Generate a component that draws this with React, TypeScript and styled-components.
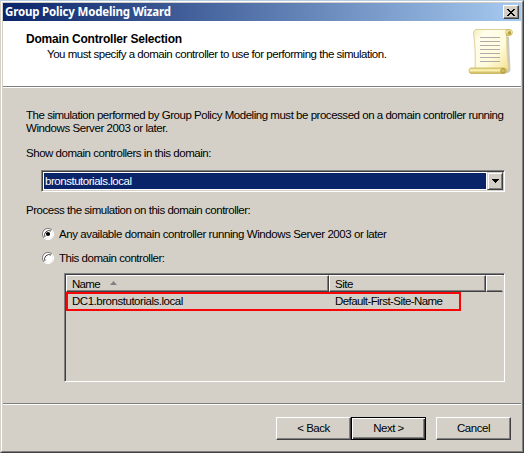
import React from "react";
import styled, { createGlobalStyle } from "styled-components";

const Global = createGlobalStyle`
  html, body { margin: 0; padding: 0; overflow: hidden; background: #d4d0c8; }
  * { box-sizing: border-box; }
`;

const Frame = styled.div`
  width: 524px;
  height: 453px;
  background: #d4d0c8;
  border-style: solid;
  border-width: 1px;
  border-color: #b9cde2 #404040 #404040 #d4d0c8;
`;

const FrameInner = styled.div`
  height: 451px;
  border-style: solid;
  border-width: 1px;
  border-color: #fff #808080 #808080 #fff;
  padding: 1px;
  display: flex;
  flex-direction: column;
  font-family: "Liberation Sans", Arial, sans-serif;
  font-size: 11.5px;
  line-height: 13px;
  color: #000;
`;

const Label = styled.span<{ $track?: number }>`
  letter-spacing: ${(p) => p.$track ?? -0.47}px;
  white-space: pre;
  display: block;
`;

const TitleBar = styled.header`
  height: 18px;
  flex: none;
  display: flex;
  align-items: center;
  justify-content: space-between;
  padding: 0 2px 0 2px;
  background: linear-gradient(90deg, #0a246a, #a6caf0);
`;

const Title = styled.h1<{ $track: number }>`
  margin: 0;
  font: bold 11.5px/18px "Noto Sans", sans-serif;
  letter-spacing: ${(p) => p.$track}px;
  color: #fff;
  white-space: pre;
`;

const CloseButton = styled.button`
  width: 16px;
  height: 14px;
  padding: 0;
  display: grid;
  place-items: center;
  background: #d4d0c8;
  border: 1px solid;
  border-color: #fff #404040 #404040 #fff;
  box-shadow: inset -1px -1px #808080;
`;

const Banner = styled.section`
  height: 67px;
  flex: none;
  display: flex;
  justify-content: space-between;
  background: #fff;
  padding: 11px 7px 0 23px;
  border-bottom: 1px solid #fff;
  box-shadow: inset 0 -1px #808080;
`;

const BannerText = styled.div`
  display: flex;
  flex-direction: column;
  gap: 2px;
`;

const Heading = styled.h2<{ $track: number }>`
  margin: 0;
  font-size: 12px;
  line-height: 14px;
  letter-spacing: ${(p) => p.$track}px;
  white-space: pre;
`;

const Indent = styled.div`
  padding-left: 21px;
`;

const Content = styled.main`
  height: 315px;
  flex: none;
  padding: 21px 16px 0 23px;
`;

const Spaced = styled.div<{ $top: number }>`
  margin-top: ${(p) => p.$top}px;
`;

const Combo = styled.div`
  margin: 10px 0 0 15px;
  width: 464px;
  height: 22px;
  display: flex;
  border: 1px solid;
  border-color: #808080 #fff #fff #808080;
  background: #fff;
  box-shadow: inset 1px 1px #404040, inset -1px -1px #d4d0c8;
  padding: 2px 1px 1px 2px;
`;

const ComboValue = styled.div`
  flex: 1;
  margin: 0 1px 1px 0;
  background: #0a246a;
  color: #fff;
  padding: 2px 0 0 1px;
`;

const ComboButton = styled.button`
  width: 16px;
  height: 18px;
  margin-top: -1px;
  padding: 0;
  display: grid;
  place-items: center;
  background: #d4d0c8;
  border: 1px solid;
  border-color: #d4d0c8 #404040 #404040 #d4d0c8;
  box-shadow: inset 1px 1px #fff, inset -1px -1px #808080;
`;

const RadioRow = styled.div<{ $top: number }>`
  display: flex;
  gap: 4px;
  height: 13px;
  margin: ${(p) => p.$top}px 0 0 16px;
`;

const ListBox = styled.div`
  margin: 8px 0 0 38px;
  width: 441px;
  height: 109px;
  border: 1px solid;
  border-color: #808080 #fff #fff #808080;
  box-shadow: inset 1px 1px #404040;
  padding: 1px 1px 0 1px;
`;

const HeaderRow = styled.div`
  display: grid;
  grid-template-columns: 263px 157px 1fr;
  height: 17px;
`;

const HeaderCell = styled.div<{ $last?: boolean }>`
  display: flex;
  align-items: center;
  gap: 10px;
  padding: 2px 0 0 5px;
  border: 1px solid;
  border-color: #fff ${(p) => (p.$last ? "#d4d0c8" : "#404040")} #404040 #fff;
  box-shadow: inset ${(p) => (p.$last ? 0 : -1)}px -1px #808080;
`;

const SortArrow = styled.svg`
  margin-bottom: 3px;
`;

const SelectedRow = styled.div`
  width: 395px;
  height: 19px;
  display: grid;
  grid-template-columns: 263px 1fr;
  border: 2px solid #f80508;
  padding: 1px 0 0 4px;
`;

const Footer = styled.footer`
  flex: 1;
  display: flex;
  justify-content: flex-end;
  border-top: 1px solid #808080;
  box-shadow: inset 0 1px #fff;
  padding: 13px 10px 0 0;
`;

const Button = styled.button<{ $primary?: boolean; $gap?: number }>`
  width: 75px;
  height: 23px;
  margin-left: ${(p) => p.$gap ?? 0}px;
  padding: 0 0 1px;
  font: inherit;
  color: #000;
  display: grid;
  place-items: center;
  background: #d4d0c8;
  border: 1px solid;
  border-color: ${(p) => (p.$primary ? "#000" : "#fff #404040 #404040 #fff")};
  box-shadow: ${(p) =>
    p.$primary
      ? "inset 1px 1px #fff, inset -1px -1px #404040, inset -2px -2px #808080"
      : "inset -1px -1px #808080"};
`;

function ScrollIcon() {
  return (
    <svg width="46" height="47" viewBox="0 0 46 47">
      <defs>
        <linearGradient id="paper" x1="0" y1="0" x2="1" y2="1">
          <stop offset="0" stopColor="#f6ecb4" />
          <stop offset=".2" stopColor="#fffdec" />
          <stop offset=".6" stopColor="#fffbdc" />
          <stop offset="1" stopColor="#f3e08a" />
        </linearGradient>
        <linearGradient id="roll" x1="0" y1="0" x2="0" y2="1">
          <stop offset="0" stopColor="#dccb78" />
          <stop offset=".4" stopColor="#fff7b8" />
          <stop offset="1" stopColor="#c2ab4a" />
        </linearGradient>
      </defs>
      <path d="M39 8L41 9Q41.500 25 42.500 42Q42 45 37 45.500Z" fill="#bfbcb0" opacity=".8" />
      <path d="M8 1.500H40Q38 3 38.500 7Q38.500 23 40.500 41L36 44H7Q8 20 5.500 6Q5.500 2 8 1.500Z" fill="url(#paper)" stroke="#ddd09a" />
      <path d="M38.500 1.500H42Q44.500 2 44.500 4.500Q44 7.500 41.500 7.500H38.500Q37 4 38.500 1.500Z" fill="url(#roll)" stroke="#cbb860" strokeWidth=".8" />
      <circle cx="41.500" cy="4.700" r="1.700" fill="#b5a144" />
      <path d="M12 9.500H32M12 13.500H32M12 17.500H32M12 21.500H32M12 25.500H32M12 29.500H32M12 33.500H32" stroke="#b1aaa6" />
      <path d="M2.500 40H36Q39 40 38.500 43Q38 45.500 36 45.500H3Q1 45 1 42.500Q1 40.500 2.500 40Z" fill="url(#roll)" stroke="#c6b35a" strokeWidth=".8" />
      <ellipse cx="35" cy="42.800" rx="2.300" ry="2.300" fill="#d1bc5a" stroke="#a38d36" strokeWidth=".8" />
    </svg>
  );
}

function Radio({ checked = false }: { checked?: boolean }) {
  return (
    <svg width="13" height="13" viewBox="0 0 13 13">
      <circle cx="6" cy="6" r="5" fill="#fff" />
      <path d="M2 10A5.500 5.500 0 0 1 10 2" fill="none" stroke="#808080" />
      <path d="M3 9A4.500 4.500 0 0 1 9 3" fill="none" stroke="#404040" />
      <path d="M10 2A5.500 5.500 0 0 1 2 10" fill="none" stroke="#fff" />
      {checked && <circle cx="6" cy="6" r="2.100" fill="#000" />}
    </svg>
  );
}

export default function App() {
  return (
    <>
      <Global />
      <Frame>
        <FrameInner>
          <TitleBar>
            <Title $track={-0.18}>Group Policy Modeling Wizard</Title>
            <CloseButton aria-label="Close">
              <svg width="8" height="7" viewBox="0 0 8 7" shapeRendering="crispEdges">
                <path d="M0 0h2v1h1v1h2v-1h1v-1h2v1h-1v1h-1v1h-1v1h1v1h1v1h1v1h-2v-1h-1v-1h-2v1h-1v1h-2v-1h1v-1h1v-1h1v-1h-1v-1h-1v-1h-1z" fill="#000" />
              </svg>
            </CloseButton>
          </TitleBar>
          <Banner>
            <BannerText>
              <Heading $track={-0.2}>Domain Controller Selection</Heading>
              <Indent>
                <Label>You must specify a domain controller to use for performing the simulation.</Label>
              </Indent>
            </BannerText>
            <Spaced $top={-4}>
              <ScrollIcon />
            </Spaced>
          </Banner>
          <Content>
            <Label>The simulation performed by Group Policy Modeling must be processed on a domain controller running</Label>
            <Label $track={-0.42}>Windows Server 2003 or later.</Label>
            <Spaced $top={12}>
              <Label>Show domain controllers in this domain:</Label>
            </Spaced>
            <Combo>
              <ComboValue>
                <Label>bronstutorials.local</Label>
              </ComboValue>
              <ComboButton aria-label="Open list">
                <svg width="7" height="4" viewBox="0 0 7 4" shapeRendering="crispEdges">
                  <path d="M0 0h7v1h-1v1h-1v1h-1v1h-1v-1h-1v-1h-1v-1h-1z" fill="#000" />
                </svg>
              </ComboButton>
            </Combo>
            <Spaced $top={12}>
              <Label>Process the simulation on this domain controller:</Label>
            </Spaced>
            <RadioRow $top={11}>
              <Radio checked />
              <Label $track={-0.42}>Any available domain controller running Windows Server 2003 or later</Label>
            </RadioRow>
            <RadioRow $top={11}>
              <Radio />
              <Label>This domain controller:</Label>
            </RadioRow>
            <ListBox>
              <HeaderRow>
                <HeaderCell>
                  <Label $track={-0.7}>Name</Label>
                  <SortArrow width="7" height="4" viewBox="0 0 7 4">
                    <path d="M0 4L3.500 0L7 4Z" fill="#808080" />
                  </SortArrow>
                </HeaderCell>
                <HeaderCell>
                  <Label>Site</Label>
                </HeaderCell>
                <HeaderCell $last />
              </HeaderRow>
              <SelectedRow>
                <Label>DC1.bronstutorials.local</Label>
                <Label $track={-0.58}>Default-First-Site-Name</Label>
              </SelectedRow>
            </ListBox>
          </Content>
          <Footer>
            <Button>
              <Label>&lt; Back</Label>
            </Button>
            <Button $primary>
              <Label>Next &gt;</Label>
            </Button>
            <Button $gap={10}>
              <Label>Cancel</Label>
            </Button>
          </Footer>
        </FrameInner>
      </Frame>
    </>
  );
}
